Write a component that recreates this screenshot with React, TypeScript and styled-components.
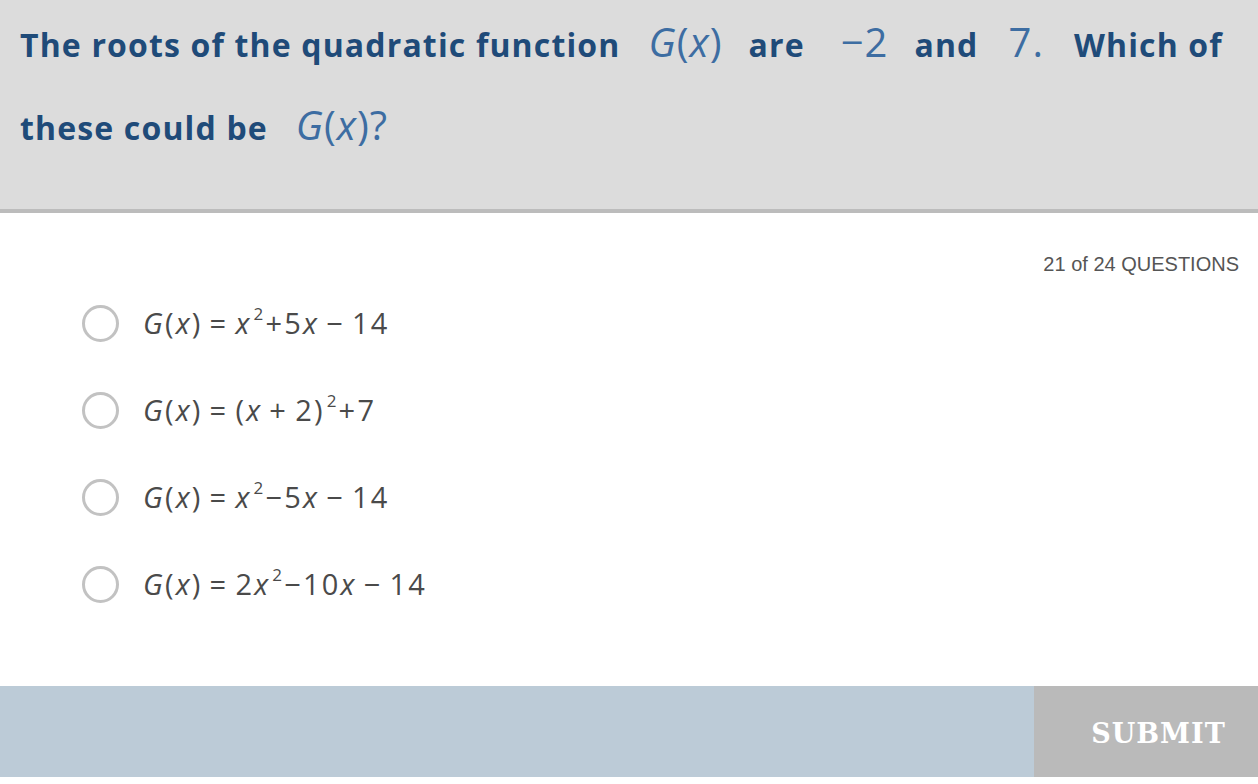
import React from "react";
import styled, { createGlobalStyle } from "styled-components";

const Global = createGlobalStyle`
  html, body { margin: 0; padding: 0; background: #ffffff; }
  body { width: 1258px; height: 784px; overflow: hidden; }
`;

const Page = styled.div`
  width: 1258px;
  display: flex;
  flex-direction: column;
`;

const Header = styled.header`
  background: #dcdcdc;
  border-bottom: 4px solid #bcbcbc;
  box-sizing: content-box;
  height: 207px;
  padding: 2px 20px 0;
`;

const Prompt = styled.p`
  margin: 0;
  font-family: "Open Sans", "Lato", sans-serif;
  font-weight: 700;
  font-size: 32px;
  line-height: 80px;
  color: #1f4b79;
  letter-spacing: 1.15px;
`;

const MathInline = styled.span<{ $gapL?: number; $gapR?: number }>`
  display: inline-block;
  font-family: "Open Sans", sans-serif;
  font-weight: 400;
  font-size: 40px;
  letter-spacing: 1px;
  color: #3d6da2;
  margin-left: ${(p) => p.$gapL ?? 26}px;
  margin-right: ${(p) => p.$gapR ?? 26}px;
`;

const Var = styled.span`
  font-style: italic;
`;

const Main = styled.main`
  height: 473px;
  display: flex;
  flex-direction: column;
`;

const Counter = styled.div`
  align-self: flex-end;
  margin: 40px 19px 0 0;
  font-family: "Liberation Sans", Arial, sans-serif;
  font-size: 20px;
  color: #555555;
`;

const Options = styled.ul`
  list-style: none;
  margin: 4px 0 0;
  padding: 0 0 0 82px;
  display: flex;
  flex-direction: column;
`;

const Option = styled.li`
  height: 87px;
  display: flex;
  align-items: center;
  gap: 24px;
`;

const Radio = styled.span`
  width: 37px;
  height: 37px;
  box-sizing: border-box;
  border: 3px solid #c2c2c2;
  border-radius: 50%;
  flex: none;
`;

const Formula = styled.span`
  font-family: "Open Sans", sans-serif;
  font-size: 29px;
  color: #4a4a4a;
  letter-spacing: 2.2px;
  white-space: pre;
  padding-bottom: 2px;
`;

const Sup = styled.sup`
  font-size: 17px;
  vertical-align: 0;
  position: relative;
  top: -14px;
  margin: 0 0 0 2px;
`;

const Footer = styled.footer`
  height: 91px;
  background: #bccbd7;
  display: flex;
  justify-content: flex-end;
`;

const Submit = styled.button`
  width: 224px;
  height: 100%;
  border: none;
  background: #bababa;
  color: #ffffff;
  font-family: "DejaVu Serif", "Liberation Serif", serif;
  font-weight: 700;
  font-size: 27px;
  letter-spacing: 1px;
  padding: 3px 0 0 25px;
`;

const G = () => (
  <>
    <Var>G</Var>(<Var>x</Var>)
  </>
);

const T = "\u2009";

const options: React.ReactNode[] = [
  <>
    <G />{T}={T}<Var>x</Var>
    <Sup>2</Sup>+5<Var>x</Var>{T}−{T}14
  </>,
  <>
    <G />{T}={T}(<Var>x</Var>{T}+{T}2)<Sup>2</Sup>+7
  </>,
  <>
    <G />{T}={T}<Var>x</Var>
    <Sup>2</Sup>−5<Var>x</Var>{T}−{T}14
  </>,
  <>
    <G />{T}={T}2<Var>x</Var>
    <Sup>2</Sup>−10<Var>x</Var>{T}−{T}14
  </>,
];

export default function App() {
  return (
    <Page>
      <Global />
      <Header>
        <Prompt>
          The roots of the quadratic function
          <MathInline $gapL={28} $gapR={26}>
            <G />
          </MathInline>
          are
          <MathInline $gapL={36} $gapR={26}>−2</MathInline>
          and
          <MathInline $gapL={30} $gapR={30}>7.</MathInline>
          Which of these could be
          <MathInline $gapL={28} $gapR={0}>
            <G />?
          </MathInline>
        </Prompt>
      </Header>
      <Main>
        <Counter>21 of 24 QUESTIONS</Counter>
        <Options>
          {options.map((o, i) => (
            <Option key={i}>
              <Radio />
              <Formula>{o}</Formula>
            </Option>
          ))}
        </Options>
      </Main>
      <Footer>
        <Submit>SUBMIT</Submit>
      </Footer>
    </Page>
  );
}
